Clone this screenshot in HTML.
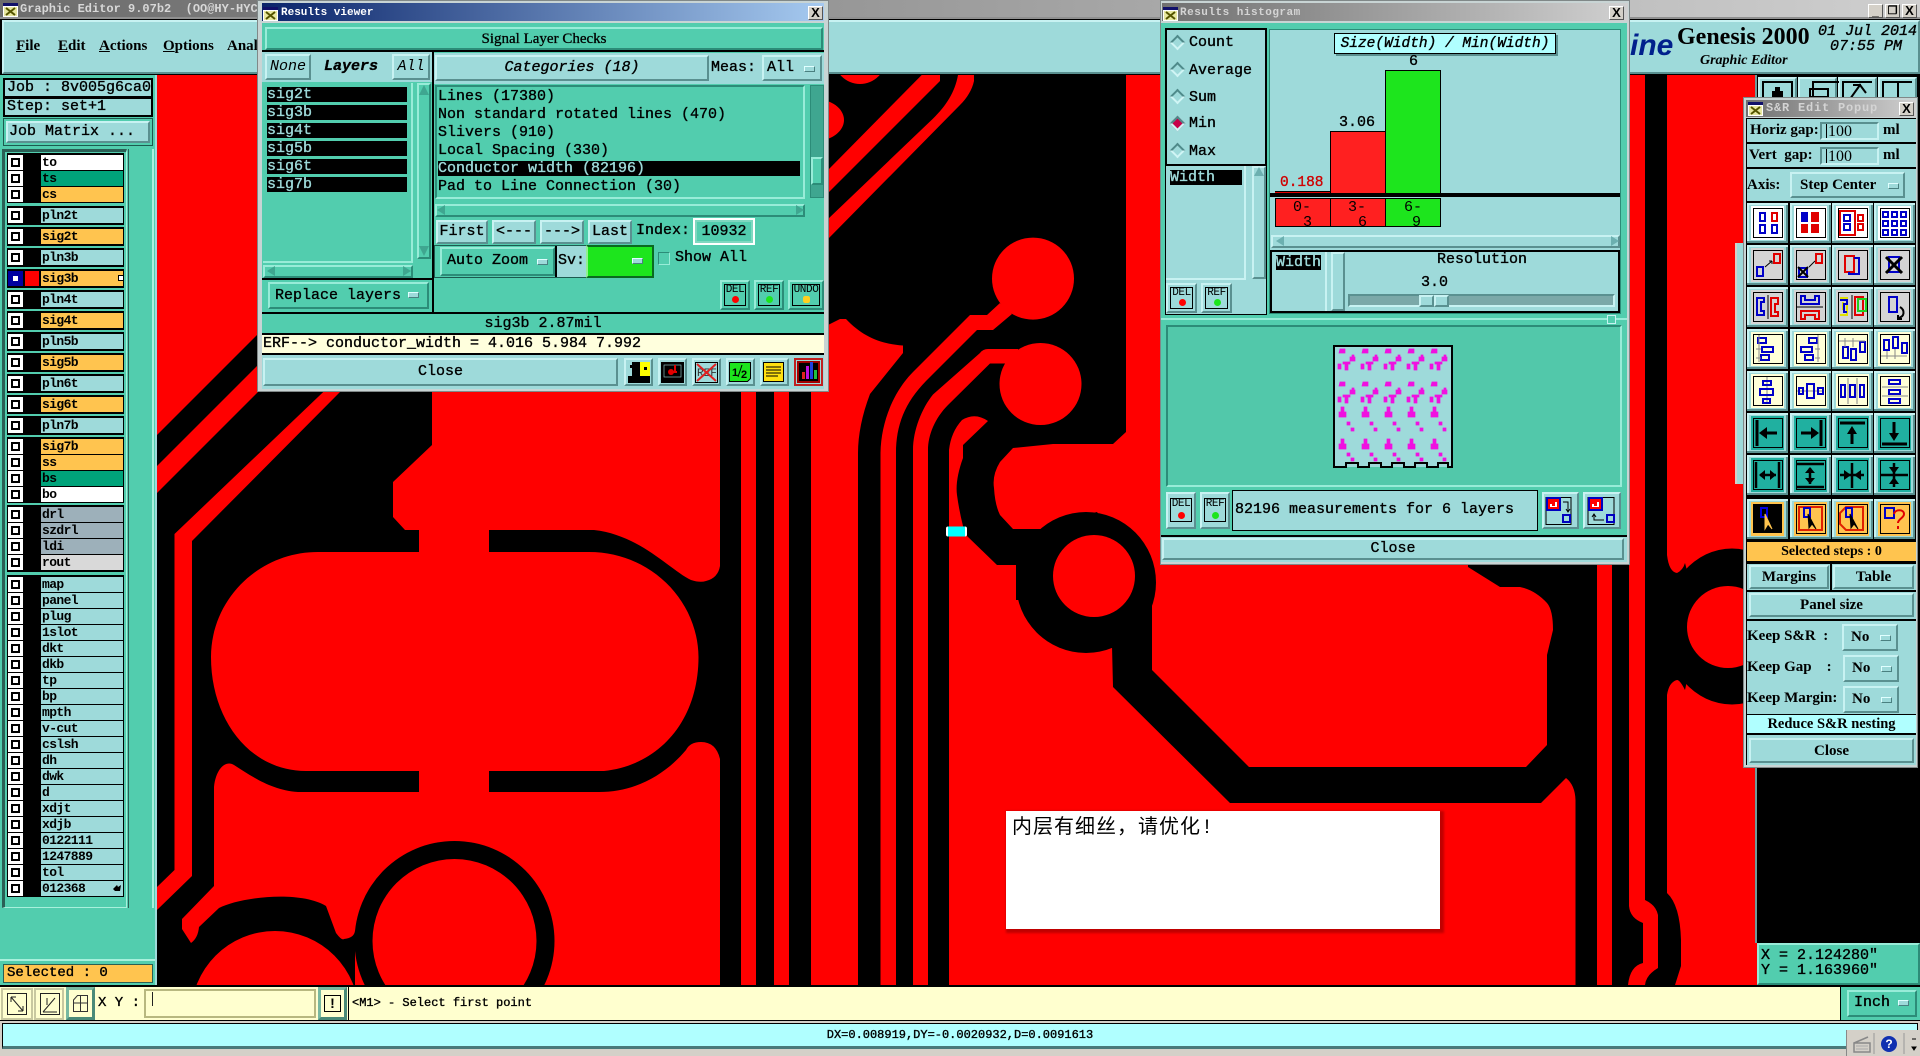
<!DOCTYPE html>
<html><head><meta charset="utf-8"><title>Graphic Editor</title>
<style>
html,body{margin:0;padding:0;width:1920px;height:1056px;overflow:hidden;background:#000}
body{position:relative;font:normal 15px/16px "Liberation Mono",monospace;color:#000;-webkit-text-stroke:.35px #000}
.a{position:absolute;box-sizing:border-box;white-space:pre}
.c{display:flex;align-items:center;justify-content:center}
.bt{background:#9edada;border:2px solid;border-color:#c8f2f2 #5a9090 #5a9090 #c8f2f2}
.tb{background:#52cdae;border:2px solid;border-color:#98ecd8 #2c8c78 #2c8c78 #98ecd8}
.sf{font:bold 15px/16px "Liberation Serif",serif;-webkit-text-stroke:0}
.n{-webkit-text-stroke:0}
.it{font-style:italic}
.mi{position:absolute;box-sizing:border-box;width:11px;height:6px;background:#9edada;border:1px solid;border-color:#e0ffff #4a8080 #4a8080 #e0ffff}
.r{position:absolute;left:8px;width:115px;height:15px}
.r s{position:absolute;left:0;top:0;width:15px;height:15px;background:#fff;box-shadow:inset 0 0 0 3px #fff,inset 0 0 0 5px #000}
.r b{position:absolute;left:33px;top:0;width:81px;height:15px;background:#9edada;font:bold 13px/15px "Liberation Mono",monospace;letter-spacing:-.6px;padding-left:1px;-webkit-text-stroke:0}
.r b.o{background:#ffc44f}.r b.g{background:#00a37a}.r b.w{background:#fff}.r b.y{background:#9db0ba}.r b.l{background:#d9d9d9}
.k{position:absolute;left:7px;width:117px;background:#000}
.sel{position:absolute;background:#000;color:#9edada;-webkit-text-stroke:.35px #9edada}
.dd{position:absolute;width:11px;height:11px;transform:rotate(45deg);background:#9edada;border:2px solid;box-sizing:border-box;border-color:#4f8a8a #d0f5f5 #d0f5f5 #4f8a8a}
.ib{position:absolute;box-sizing:border-box;border:1px solid #000;left:4px;top:3px;right:4px;bottom:3px;font:11px/11px "Liberation Mono",monospace;letter-spacing:-.4px;text-align:center;color:#000;-webkit-text-stroke:0}
.ib i{position:absolute;left:50%;bottom:2px;margin-left:-3px;width:7px;height:7px;border-radius:50%}
.xb{position:absolute;box-sizing:border-box;width:15px;height:14px;background:#d4d0c8;border:1px solid;border-color:#fff #555 #555 #fff;font:bold 13px/12px "Liberation Sans",sans-serif;text-align:center;color:#000;-webkit-text-stroke:0}
</style></head><body>

<svg width="0" height="0" style="position:absolute"><defs>
<g id="tic"><rect width="15" height="14" fill="#fff"/><rect width="15" height="3" fill="#10106a"/><rect x="1" y="4" width="13" height="9" fill="#e8e8a0"/><path d="M3 5l9 7M12 5l-9 7" stroke="#555500" stroke-width="2"/></g>
<g id="cb"><rect width="41" height="40" fill="#9edada"/><path d="M0 0h41v2H2v36H0z" fill="#c8f2f2"/><path d="M41 40H0v-2h39V2h2z" fill="#5a9090"/></g>
</defs></svg>

<!-- PCB canvas -->
<svg class="a" style="left:157px;top:75px" width="1600" height="910" viewBox="157 75 1600 910">
<rect x="157" y="75" width="1600" height="910" fill="#000"/>
<g fill="#f00">
<path d="M157 75H300V292L157 435Z"/>
<path d="M157 466L329 294H356L157 493Z"/>
<path d="M174.5 534L340 376H358L340 392L192 541V876L157 910V887L174.5 870Z"/>
<path d="M432 385V445L393 482V517L405 530H419V552H318C258 552 211 600 211 657C211 720 250 771 306 771H419V792H298C270 790 250 775 234 765C226 760 216 768 214 787V886L182 919V929L191 943Q198 938 199 927L219 908C240 897 300 890 326 906L336 933Q342 941 344 939Q354 938 355 931V985H720V759Q716 742 701 742Q690 742 686 750C665 775 635 792 599 792H489V771H604C660 765 698.5 720 698.5 657C698 600 650 552 589 552H489V530H594C640 535 670 570 691 580Q700 583 706 581Q718 578 720 566V385Z"/>
<rect x="741" y="380" width="15" height="605"/><rect x="774" y="380" width="15" height="605"/>
<path d="M811 985V325H828L840 319H846C862 336 880 344 903 345.5V353L870 394C862 415 858 435 858 453V985Z"/>
<path d="M880.5 985V453C881 420 895 390 913 372L970 315H987L1000 303L1012 314L993 330H977L927 380C905 402 896 425 896 453V985Z"/>
<path d="M913 985V450C913 430 922 408 933 394.5L980 353Q983 349 988 349H1018V363.5H990L948 405C935 418 928 435 928 450V985Z"/>
<circle cx="1033" cy="278.6" r="41"/><circle cx="1040.5" cy="384" r="41"/>
<path d="M921.7 75H940V81L828 193V170Z"/>
<path d="M958 75H974V81C972 90 967 98 960 105L828 239V219L933 118.6C946 106 955 92 958 75Z"/>
<circle cx="860" cy="58" r="26"/><ellipse cx="815" cy="120" rx="29" ry="21"/>
<path d="M949 985V450Q951 432 962 420Q975 412 988 421L963 445V458Q955 480 957 495Q959 510 963 526L967 536L997 565H1016V600H1112V646L1113 687L1230 803H1541L1566 778Q1575 785 1575.5 800V985Z"/>
<path d="M1126 75V432L1113 444H1053L1013 448L1000 462Q992 475 994 488Q995 505 1000 515L1013 529H1053L1077 517L1097 512L1110 530L1152 590V670L1249 767H1526L1547 745V655L1553 630Q1553 610 1547 603Q1535 590 1520 587H1500L1468 567V75Z"/>
<rect x="1597" y="75" width="15" height="910"/>
<path d="M1629 75V906Q1630 918 1643 923V963Q1630 966 1628 985H1645Q1646 975 1658 968V915Q1656 905 1645 900V75Z"/>
<path d="M1667 75V555Q1669 572 1677 573Q1683 570 1685 563L1700 620L1685 690Q1680 680 1677 680Q1669 682 1667 695V893Q1680 905 1681 940V966L1675 985H1757V75Z"/>
</g>
<ellipse cx="454.5" cy="941" rx="100" ry="100" fill="#000"/><ellipse cx="454.5" cy="941" rx="82" ry="82" fill="#f00"/>
<circle cx="275" cy="1015" r="84" fill="#f00"/>
<ellipse cx="1086" cy="582.5" rx="70" ry="70.5" fill="#000"/><circle cx="1094" cy="576" r="41" fill="#f00"/>
<ellipse cx="1732" cy="626.5" rx="68" ry="78" fill="#000"/><circle cx="1728" cy="627" r="41" fill="#f00"/>
<rect x="946" y="526.5" width="21" height="10" rx="2" fill="#fff"/><rect x="948" y="526.5" width="17" height="10" fill="#0ff"/>
</svg>

<!-- annotation -->
<div class="a" style="left:1006px;top:811px;width:438px;height:122px;background:#c00000;filter:blur(1px)"></div>
<div class="a n" style="left:1006px;top:811px;width:434px;height:118px;background:#fff;padding:6px 0 0 6px;font:20px/24px 'Liberation Mono','Noto Sans CJK SC',sans-serif;letter-spacing:1px">内层有细丝，请优化!</div>

<!-- main title + menu -->
<div class="a" style="left:0;top:0;width:1920px;height:19px;background:linear-gradient(90deg,#6c6c6c,#cfcfcf);border-bottom:2px solid #909090"></div>
<svg class="a" style="left:3px;top:3px" width="15" height="14"><use href="#tic"/></svg>
<div class="a n" style="left:20px;top:1px;font:bold 12px/16px 'Liberation Mono',monospace;color:#d8d8d8">Graphic Editor 9.07b2  (OO@HY-HYCAM</div>
<div class="xb" style="left:1868px;top:4px;font-size:12px">_</div><div class="xb" style="left:1885px;top:4px;font-size:11px">&#x2750;</div><div class="xb" style="left:1902px;top:4px">X</div>
<div class="a" style="left:2px;top:20px;width:1918px;height:54px;background:#9edada;border:2px solid;border-color:#c8f2f2 #5a9090 #5a9090 #c8f2f2"></div>
<div class="a sf" style="left:16px;top:38px"><u>F</u>ile</div>
<div class="a sf" style="left:58px;top:38px"><u>E</u>dit</div>
<div class="a sf" style="left:99px;top:38px"><u>A</u>ctions</div>
<div class="a sf" style="left:163px;top:38px"><u>O</u>ptions</div>
<div class="a sf" style="left:227px;top:38px">Analysis</div>
<div class="a n" style="left:1630px;top:31px;font:italic bold 30px/30px 'Liberation Sans',sans-serif;color:#00208c">ine</div>
<div class="a n" style="left:1677px;top:23px;font:bold 24px/28px 'Liberation Serif',serif">Genesis 2000</div>
<div class="a n" style="left:1700px;top:53px;font:italic bold 14px/16px 'Liberation Serif',serif">Graphic Editor</div>
<div class="a" style="left:1818px;top:24px;font:italic 15px/16px 'Liberation Mono',monospace">01 Jul 2014</div>
<div class="a" style="left:1830px;top:39px;font:italic 15px/16px 'Liberation Mono',monospace">07:55 PM</div>

<!-- right panel back -->
<div class="a" style="left:1755px;top:75px;width:165px;height:868px;background:#000;border-left:2px solid #6f9a9a"></div>
<div class="a bt" style="left:1758px;top:77px;width:39px;height:30px"></div><div class="a bt" style="left:1798px;top:77px;width:39px;height:30px"></div><div class="a bt" style="left:1838px;top:77px;width:39px;height:30px"></div><div class="a bt" style="left:1878px;top:77px;width:39px;height:30px"></div>
<svg class="a" style="left:1758px;top:77px" width="160" height="20" fill="none" stroke="#000" stroke-width="2">
<path d="M5 22V5h29v17M55 22V5h26M85 22V5h29M125 22V5h29"/><path d="M14 20v-6h3v-4h5v4h3v6z" fill="#000" stroke="none"/><path d="M52 20h18V12H52zM92 22l10-14 6 8M95 8h8M140 5v18"/></svg>
<div class="a tb" style="left:1757px;top:943px;width:163px;height:42px"></div>
<div class="a" style="left:1761px;top:948px">X = 2.124280"</div>
<div class="a" style="left:1761px;top:963px">Y = 1.163960"</div>

<!-- hidden window behind S&R -->
<div class="a" style="left:1735px;top:243px;width:10px;height:241px;background:#9edada;border-left:2px solid #d4d0c8"></div>

<!-- left panel -->
<div class="a" style="left:0;top:75px;width:157px;height:911px;background:#52cdae;border-right:2px solid #9edada"></div>
<div class="a" style="left:3px;top:78px;width:150px;height:20px;background:#9edada;border:2px solid #000;padding-left:2px;line-height:15px">Job : 8v005g6ca0</div>
<div class="a" style="left:3px;top:97px;width:150px;height:20px;background:#9edada;border:2px solid #000;padding-left:2px;line-height:15px">Step: set+1</div>
<div class="a" style="left:3px;top:118px;width:150px;height:28px;background:#52cdae;border:1px solid #1d5a50"></div>
<div class="a bt c" style="left:6px;top:121px;width:144px;height:22px;justify-content:flex-start;padding-left:1px">Job Matrix ...</div>
<div class="a" style="left:2px;top:149px;width:125px;height:759px;background:#52cdae;border-left:3px solid #2a5f55;border-top:3px solid #2a5f55;border-right:1px solid #a8f0dc;border-bottom:1px solid #a8f0dc"></div>
<div class="a" style="left:128px;top:149px;width:26px;height:812px;background:#52cdae;border-left:1px solid #2a5f55;border-right:2px solid #a8f0dc"></div>
<div class="a" style="left:0;top:908px;width:155px;height:53px;background:#52cdae;border-bottom:2px solid #a8f0dc"></div>
<div class="k" style="top:153px;height:50px"></div><div class="k" style="top:206px;height:19px"></div><div class="k" style="top:227px;height:19px"></div><div class="k" style="top:248px;height:19px"></div><div class="k" style="top:269px;height:19px"></div><div class="k" style="top:290px;height:19px"></div><div class="k" style="top:311px;height:19px"></div><div class="k" style="top:332px;height:19px"></div><div class="k" style="top:353px;height:19px"></div><div class="k" style="top:374px;height:19px"></div><div class="k" style="top:395px;height:19px"></div><div class="k" style="top:416px;height:19px"></div><div class="k" style="top:437px;height:66px"></div><div class="k" style="top:505px;height:67px"></div><div class="k" style="top:575px;height:322px"></div>
<div class="r" style="top:155px"><s></s><b class="w">to</b></div>
<div class="r" style="top:171px"><s></s><b class="g">ts</b></div>
<div class="r" style="top:187px"><s></s><b class="o">cs</b></div>
<div class="r" style="top:208px"><s></s><b>pln2t</b></div>
<div class="r" style="top:229px"><s></s><b class="o">sig2t</b></div>
<div class="r" style="top:250px"><s></s><b>pln3b</b></div>
<div class="r" style="top:271px"><s style="box-shadow:inset 0 0 0 2px #0000a0,inset 0 0 0 5px #0000a0"></s><i style="position:absolute;left:17px;top:0;width:14px;height:15px;background:#f00"></i><b class="o">sig3b</b><i style="position:absolute;left:110px;top:4px;width:6px;height:6px;border:1px solid #000;box-sizing:border-box;background:#fff"></i></div>
<div class="r" style="top:292px"><s></s><b>pln4t</b></div>
<div class="r" style="top:313px"><s></s><b class="o">sig4t</b></div>
<div class="r" style="top:334px"><s></s><b>pln5b</b></div>
<div class="r" style="top:355px"><s></s><b class="o">sig5b</b></div>
<div class="r" style="top:376px"><s></s><b>pln6t</b></div>
<div class="r" style="top:397px"><s></s><b class="o">sig6t</b></div>
<div class="r" style="top:418px"><s></s><b>pln7b</b></div>
<div class="r" style="top:439px"><s></s><b class="o">sig7b</b></div>
<div class="r" style="top:455px"><s></s><b class="o">ss</b></div>
<div class="r" style="top:471px"><s></s><b class="g">bs</b></div>
<div class="r" style="top:487px"><s></s><b class="w">bo</b></div>
<div class="r" style="top:507px"><s></s><b class="y">drl</b></div>
<div class="r" style="top:523px"><s></s><b class="y">szdrl</b></div>
<div class="r" style="top:539px"><s></s><b class="y">ldi</b></div>
<div class="r" style="top:555px"><s></s><b class="l">rout</b></div>
<div class="r" style="top:577px"><s></s><b>map</b></div>
<div class="r" style="top:593px"><s></s><b>panel</b></div>
<div class="r" style="top:609px"><s></s><b>plug</b></div>
<div class="r" style="top:625px"><s></s><b>1slot</b></div>
<div class="r" style="top:641px"><s></s><b>dkt</b></div>
<div class="r" style="top:657px"><s></s><b>dkb</b></div>
<div class="r" style="top:673px"><s></s><b>tp</b></div>
<div class="r" style="top:689px"><s></s><b>bp</b></div>
<div class="r" style="top:705px"><s></s><b>mpth</b></div>
<div class="r" style="top:721px"><s></s><b>v-cut</b></div>
<div class="r" style="top:737px"><s></s><b>cslsh</b></div>
<div class="r" style="top:753px"><s></s><b>dh</b></div>
<div class="r" style="top:769px"><s></s><b>dwk</b></div>
<div class="r" style="top:785px"><s></s><b>d</b></div>
<div class="r" style="top:801px"><s></s><b>xdjt</b></div>
<div class="r" style="top:817px"><s></s><b>xdjb</b></div>
<div class="r" style="top:833px"><s></s><b>0122111</b></div>
<div class="r" style="top:849px"><s></s><b>1247889</b></div>
<div class="r" style="top:865px"><s></s><b>tol</b></div>
<div class="r" style="top:881px"><s></s><b>012368</b><svg style="position:absolute;left:104px;top:3px" width="10" height="9"><path d="M1 5l4-4 1 2 3-2-1 6H3z"/></svg></div>
<div class="a" style="left:3px;top:964px;width:150px;height:19px;background:#ffc44f;border:1px solid #2a5f55;padding-left:3px;line-height:17px;font-size:14px">Selected : 0</div>

<!-- bottom toolbar -->
<div class="a" style="left:0;top:985px;width:1920px;height:71px;background:#000"></div>
<div class="a" style="left:0;top:987px;width:1840px;height:33px;background:#ffffcf"></div>
<div class="a" style="left:1px;top:988px;width:32px;height:32px;background:#ffffcf;border:2px solid #c8c8a0"></div>
<div class="a" style="left:34px;top:988px;width:30px;height:32px;background:#ffffcf;border:2px solid #c8c8a0"></div>
<svg class="a" style="left:6px;top:992px" width="22" height="24" fill="none" stroke="#222"><rect x="1.5" y="1.5" width="19" height="21"/><path d="M5 5l12 14M5 5v5M5 5h5M17 19v-5M17 19h-5"/></svg>
<svg class="a" style="left:39px;top:992px" width="22" height="24" fill="none" stroke="#222"><rect x="1.5" y="1.5" width="19" height="21"/><path d="M4 20L16 6M4 20h14M8 6v7"/></svg>
<div class="a" style="left:66px;top:987px;width:29px;height:33px;background:#ffffcf;border:3px solid;border-color:#78b8a0 #4a8a78 #4a8a78 #78b8a0"></div>
<svg class="a" style="left:72px;top:994px" width="17" height="19" fill="none" stroke="#333"><path d="M1.5 17.5V6l4-4.5h10V17.5zM1.5 9h14M8.500 1.500V17.500"/></svg>
<div class="a" style="left:98px;top:995px;font-size:14px">X Y :</div>
<div class="a" style="left:144px;top:989px;width:172px;height:29px;background:#ffffcf;border:2px solid #b8b880"></div>
<div class="a" style="left:152px;top:992px;width:1px;height:14px;background:#222"></div>
<div class="a" style="left:318px;top:987px;width:29px;height:33px;background:#ffffcf;border:3px solid;border-color:#78b8a0 #4a8a78 #4a8a78 #78b8a0"></div>
<div class="a n" style="left:324px;top:995px;width:17px;height:17px;border:1px solid #000;font:bold 14px/15px 'Liberation Sans',sans-serif;text-align:center">!</div>
<div class="a" style="left:352px;top:995px;font-size:12px">&lt;M1&gt; - Select first point</div>
<div class="a" style="left:348px;top:987px;width:1px;height:33px;background:#000"></div>
<div class="a" style="left:1840px;top:987px;width:80px;height:33px;background:#52cdae;border-left:1px solid #000"></div>
<div class="a tb" style="left:1847px;top:990px;width:70px;height:27px;line-height:22px;padding-left:5px">Inch<i class="mi" style="left:49px;top:8px"></i></div>

<!-- status bar -->
<div class="a" style="left:0;top:1021px;width:1920px;height:35px;background:#d4d0c8"></div>
<div class="a" style="left:2px;top:1023px;width:1916px;height:26px;background:#b0ffff;border:1px solid #000;border-bottom:3px solid #4a7a7a"></div>
<div class="a c" style="left:2px;top:1027px;width:1916px;height:16px;font-size:12px">DX=0.008919,DY=-0.0020932,D=0.0091613</div>
<div class="a" style="left:1846px;top:1030px;width:74px;height:26px;background:#d4d0c8;border-left:1px solid #888"></div>
<svg class="a" style="left:1852px;top:1033px" width="68" height="21" fill="none"><path d="M2 10h16v9H2zM2 10l14-6" stroke="#888" stroke-width="1.500"/><path d="M4 13h12M4 16h12" stroke="#aaa"/><path d="M22 0v21M52 0v21" stroke="#999"/><circle cx="37" cy="11" r="8" fill="#1030b0"/><path d="M60 6h4M60 14h4l-2 3z" stroke="#000" fill="#000"/></svg>
<div class="a c n" style="left:1881px;top:1036px;width:16px;height:16px;color:#fff;font:bold 12px/16px 'Liberation Sans',sans-serif">?</div>

<!-- RESULTS VIEWER -->
<div class="a" style="left:257px;top:0;width:572px;height:392px;background:#c8d4d4;border:1px solid #808888"></div>
<div class="a" style="left:262px;top:3px;width:562px;height:18px;background:linear-gradient(90deg,#0a246a,#a6caf0)"></div>
<svg class="a" style="left:263px;top:7px" width="15" height="14"><use href="#tic"/></svg>
<div class="a n" style="left:281px;top:5px;font:bold 11px/16px 'Liberation Mono',monospace;color:#fff">Results viewer</div>
<div class="xb" style="left:808px;top:6px">X</div>
<div class="a" style="left:262px;top:23px;width:562px;height:366px;background:#52cdae"></div>
<div class="a tb c sf" style="left:265px;top:27px;width:558px;height:23px;font-weight:normal;-webkit-text-stroke:.3px #000">Signal Layer Checks</div>
<div class="a" style="left:262px;top:50px;width:562px;height:2px;background:#000"></div>
<div class="a" style="left:262px;top:52px;width:172px;height:30px;background:#9edada"></div>
<div class="a bt c it n" style="left:265px;top:54px;width:46px;height:26px">None</div>
<div class="a c it" style="left:313px;top:54px;width:76px;height:26px;font-weight:bold">Layers</div>
<div class="a bt c it n" style="left:392px;top:54px;width:38px;height:26px">All</div>
<div class="a" style="left:432px;top:52px;width:2px;height:260px;background:#000"></div>
<div class="a" style="left:434px;top:53px;width:390px;height:31px;background:#9edada"></div>
<div class="a bt c it" style="left:435px;top:55px;width:274px;height:26px">Categories (18)</div>
<div class="a" style="left:711px;top:60px">Meas:</div>
<div class="a bt" style="left:762px;top:55px;width:60px;height:26px;padding-left:3px;line-height:21px">All<i class="mi" style="left:40px;top:9px"></i></div>
<!-- layers list -->
<div class="a" style="left:263px;top:83px;width:150px;height:180px;border-right:2px solid #98ecd8;border-bottom:2px solid #98ecd8"></div>
<div class="sel" style="left:267px;top:87px;width:140px;height:15px;line-height:15px">sig2t</div>
<div class="sel" style="left:267px;top:105px;width:140px;height:15px;line-height:15px">sig3b</div>
<div class="sel" style="left:267px;top:123px;width:140px;height:15px;line-height:15px">sig4t</div>
<div class="sel" style="left:267px;top:141px;width:140px;height:15px;line-height:15px">sig5b</div>
<div class="sel" style="left:267px;top:159px;width:140px;height:15px;line-height:15px">sig6t</div>
<div class="sel" style="left:267px;top:177px;width:140px;height:15px;line-height:15px">sig7b</div>
<div class="a tb" style="left:417px;top:83px;width:14px;height:176px"></div>
<div class="a tb" style="left:263px;top:265px;width:150px;height:13px"></div>
<div class="a tb c" style="left:268px;top:282px;width:161px;height:27px;justify-content:flex-start;padding-left:5px">Replace layers<i class="mi" style="left:138px;top:8px"></i></div>
<div class="a" style="left:262px;top:278px;width:172px;height:2px;background:#000"></div>
<!-- categories list -->
<div class="a" style="left:435px;top:85px;width:370px;height:114px;border:2px solid;border-color:#2c8c78 #98ecd8 #98ecd8 #2c8c78"></div>
<div class="a" style="left:438px;top:89px">Lines (17380)</div>
<div class="a" style="left:438px;top:107px">Non standard rotated lines (470)</div>
<div class="a" style="left:438px;top:125px">Slivers (910)</div>
<div class="a" style="left:438px;top:143px">Local Spacing (330)</div>
<div class="sel" style="left:438px;top:161px;width:362px;height:15px;line-height:15px">Conductor width (82196)</div>
<div class="a" style="left:438px;top:179px">Pad to Line Connection (30)</div>
<div class="a" style="left:810px;top:85px;width:14px;height:113px;background:#3fa690;border:1px solid #2c8c78"></div>
<div class="a tb" style="left:811px;top:157px;width:12px;height:28px"></div>
<div class="a tb" style="left:435px;top:204px;width:370px;height:13px;background:#52cdae"></div>
<div class="a bt c" style="left:436px;top:220px;width:52px;height:24px">First</div>
<div class="a bt c" style="left:492px;top:220px;width:44px;height:24px">&lt;---</div>
<div class="a bt c" style="left:540px;top:220px;width:44px;height:24px">---&gt;</div>
<div class="a bt c" style="left:588px;top:220px;width:44px;height:24px">Last</div>
<div class="a" style="left:636px;top:223px">Index:</div>
<div class="a c" style="left:693px;top:218px;width:62px;height:27px;border:2px solid #fff;outline:2px solid #7fd8c0;outline-offset:-4px">10932</div>
<div class="a" style="left:434px;top:245px;width:122px;height:33px;background:#52cdae;border:1px solid #1d5a50;border-right:0"></div>
<div class="a" style="left:556px;top:245px;width:31px;height:33px;background:#9edada;border:solid #1d5a50;border-width:1px 0"></div>
<div class="a tb" style="left:440px;top:247px;width:115px;height:29px;line-height:24px;padding-left:5px">Auto Zoom<i class="mi" style="left:95px;top:10px"></i></div>
<div class="a" style="left:555px;top:246px;width:2px;height:31px;background:#000"></div>
<div class="a" style="left:558px;top:253px">Sv:</div>
<div class="a" style="left:586px;top:245px;width:68px;height:33px;background:#1de51d;border:2px solid;border-color:#0a6a20 #0a6a20 #0a6a20 #90f090"></div>
<i class="mi" style="left:632px;top:258px;background:#9edada"></i>
<div class="a" style="left:658px;top:252px;width:12px;height:13px;border:1px solid;border-color:#2c8c78 #98ecd8 #98ecd8 #2c8c78"></div>
<div class="a" style="left:675px;top:250px">Show All</div>
<div class="a tb" style="left:720px;top:280px;width:30px;height:30px"><div class="ib" style="left:2px;right:2px;top:2px;bottom:2px">DEL<i style="background:#f00"></i></div></div>
<div class="a tb" style="left:754px;top:280px;width:30px;height:30px"><div class="ib" style="left:2px;right:2px;top:2px;bottom:2px">REF<i style="background:#1de51d"></i></div></div>
<div class="a tb" style="left:788px;top:280px;width:36px;height:30px"><div class="ib" style="left:2px;right:2px;top:2px;bottom:2px">UNDO<i style="background:#ffd020;border-radius:30%"></i></div></div>
<div class="a" style="left:262px;top:312px;width:562px;height:2px;background:#000"></div>
<div class="a c" style="left:262px;top:315px;width:562px;height:18px">sig3b 2.87mil</div>
<div class="a" style="left:262px;top:333px;width:562px;height:22px;background:#ffffdd;border:2px solid #000;border-width:2px 0;padding-left:1px;line-height:18px">ERF--&gt; conductor_width = 4.016 5.984 7.992</div>
<div class="a" style="left:262px;top:355px;width:562px;height:34px;background:#9edada"></div>
<div class="a bt c" style="left:263px;top:358px;width:355px;height:28px">Close</div>
<div class="a bt" style="left:624px;top:358px;width:29px;height:28px"></div><div class="a bt" style="left:658px;top:358px;width:29px;height:28px"></div><div class="a bt" style="left:692px;top:358px;width:29px;height:28px"></div><div class="a bt" style="left:726px;top:358px;width:29px;height:28px"></div><div class="a bt" style="left:760px;top:358px;width:29px;height:28px"></div><div class="a bt" style="left:794px;top:358px;width:29px;height:28px;border-color:#c02020"></div>
<svg class="a n" style="left:0;top:0" width="830" height="392" fill="none">
<rect x="628" y="376" width="22" height="7" fill="#000"/><rect x="632" y="362" width="8" height="14" fill="#000"/><rect x="640" y="362" width="10" height="14" fill="#ff0"/><rect x="630" y="365" width="3" height="3" fill="#000"/><rect x="644" y="367" width="3" height="3" fill="#000"/>
<rect x="661.500" y="362.500" width="22" height="20" fill="#000" stroke="#000"/><rect x="664" y="365" width="17" height="12" fill="#000" stroke="#9edada" stroke-width=".6"/><circle cx="671" cy="372" r="3" fill="#e00000"/><path d="M673 372h4M675 365v7" stroke="#e00000" stroke-width="2"/>
<rect x="695.500" y="362.500" width="22" height="20" stroke="#000"/><text x="697" y="376" font-family="Liberation Mono" font-size="11" fill="#333">REF</text><path d="M697 364l19 17M716 364l-19 17" stroke="#e02020" stroke-width="2"/>
<path d="M729.500 362.500h21v16l-3 3h-18z" fill="#1de51d" stroke="#000"/><text x="732" y="376" font-family="Liberation Sans" font-weight="bold" font-size="11" fill="#000">1</text><path d="M738 377l4-12" stroke="#000"/><text x="741" y="378" font-family="Liberation Sans" font-weight="bold" font-size="11" fill="#000">2</text>
<path d="M763.500 362.500h20v19h-20z" fill="#ffe010" stroke="#000"/><path d="M766 367h15M766 370h15M766 373h15M766 376h12" stroke="#000"/>
<rect x="798" y="362" width="21" height="20" fill="#000" stroke="#a00000" stroke-width="2"/><rect x="802" y="372" width="3" height="7" fill="#e02020"/><rect x="806" y="366" width="3" height="13" fill="#c010e0"/><rect x="810" y="362" width="3" height="17" fill="#2040e0"/><rect x="814" y="370" width="3" height="9" fill="#20c040"/>
<g fill="#3fa690"><path d="M424 85l5 10h-10zM424 256l5-10h-10zM267 271l8-5v10zM411 271l-8-5v10zM817 88l5 9h-10zM817 196l5-9h-10zM437 210l8-5v10zM804 210l-8-5v10z"/></g>
</svg>

<!-- RESULTS HISTOGRAM -->
<div class="a" style="left:1160px;top:0;width:470px;height:565px;background:#c8d4d4;border:1px solid #808888"></div>
<div class="a" style="left:1162px;top:3px;width:466px;height:18px;background:linear-gradient(90deg,#707070,#d0d0d0)"></div>
<svg class="a" style="left:1163px;top:7px" width="15" height="14"><use href="#tic"/></svg>
<div class="a n" style="left:1180px;top:5px;font:bold 11px/16px 'Liberation Mono',monospace;color:#d4d4d4;letter-spacing:.5px">Results histogram</div>
<div class="xb" style="left:1609px;top:6px">X</div>
<div class="a" style="left:1161px;top:23px;width:466px;height:514px;background:#52cdae"></div>
<div class="a" style="left:1165px;top:28px;width:102px;height:138px;background:#9edada;border:2px solid #000"></div>
<div class="dd" style="left:1172px;top:37px"></div><div class="a" style="left:1189px;top:35px">Count</div>
<div class="dd" style="left:1172px;top:64px"></div><div class="a" style="left:1189px;top:63px">Average</div>
<div class="dd" style="left:1172px;top:91px"></div><div class="a" style="left:1189px;top:90px">Sum</div>
<div class="dd" style="left:1172px;top:118px;background:#c8004a"></div><div class="a" style="left:1189px;top:116px">Min</div>
<div class="dd" style="left:1172px;top:145px"></div><div class="a" style="left:1189px;top:144px">Max</div>
<div class="a" style="left:1165px;top:166px;width:102px;height:149px;background:#9edada;border:1px solid #000;border-top:0"></div>
<div class="a" style="left:1166px;top:166px;width:80px;height:114px;border-right:2px solid #c8f2f2;border-bottom:2px solid #c8f2f2"></div>
<div class="sel" style="left:1170px;top:170px;width:72px;height:15px;line-height:15px;color:#9edada">Width</div>
<div class="a bt" style="left:1252px;top:166px;width:14px;height:113px"></div>
<div class="a bt" style="left:1166px;top:283px;width:31px;height:30px"><div class="ib" style="left:2px;right:2px;top:2px;bottom:2px">DEL<i style="background:#f00"></i></div></div>
<div class="a bt" style="left:1201px;top:283px;width:31px;height:30px"><div class="ib" style="left:2px;right:2px;top:2px;bottom:2px">REF<i style="background:#1de51d"></i></div></div>
<div class="a" style="left:1269px;top:29px;width:352px;height:285px;background:#9edada;border:1px solid #2c8c78"></div>
<div class="a c it" style="left:1334px;top:33px;width:222px;height:21px;background:#b0ffff;border:1px solid #000;box-shadow:2px 2px 0 #5a9090;font-size:14.500px">Size(Width) / Min(Width)</div>
<div class="a" style="left:1275px;top:191px;width:55px;height:2px;background:#d00;border-top:1px solid #000"></div>
<div class="a" style="left:1330px;top:131px;width:56px;height:62px;background:#ff2020;border:1px solid #000;border-bottom:0"></div>
<div class="a" style="left:1385px;top:70px;width:56px;height:123px;background:#1de51d;border:1px solid #000;border-bottom:0"></div>
<div class="a" style="left:1270px;top:193px;width:350px;height:4px;background:#000"></div>
<div class="a" style="left:1280px;top:175px;color:#d00000;font-size:14.500px;-webkit-text-stroke:.35px #d00000">0.188</div>
<div class="a" style="left:1339px;top:115px;font-size:15px">3.06</div>
<div class="a" style="left:1409px;top:54px;font-size:15px">6</div>
<div class="a" style="left:1275px;top:198px;width:56px;height:29px;background:#ff2020;border:1px solid #000"></div>
<div class="a" style="left:1330px;top:198px;width:56px;height:29px;background:#ff2020;border:1px solid #000"></div>
<div class="a" style="left:1385px;top:198px;width:56px;height:29px;background:#1de51d;border:1px solid #000"></div>
<div class="a n" style="left:1293px;top:200px">0-</div><div class="a n" style="left:1303px;top:215px;height:12px;overflow:hidden">3</div>
<div class="a n" style="left:1348px;top:200px">3-</div><div class="a n" style="left:1358px;top:215px;height:12px;overflow:hidden">6</div>
<div class="a n" style="left:1404px;top:200px">6-</div><div class="a n" style="left:1412px;top:215px;height:12px;overflow:hidden">9</div>
<div class="a bt" style="left:1271px;top:235px;width:349px;height:13px"></div>
<div class="a" style="left:1270px;top:250px;width:350px;height:63px;background:#9edada;border:2px solid #000"></div>
<div class="a" style="left:1272px;top:252px;width:55px;height:59px;border-right:2px solid #c8f2f2"></div>
<div class="sel" style="left:1276px;top:255px;width:45px;height:15px;line-height:15px">Width</div>
<div class="a bt" style="left:1331px;top:252px;width:14px;height:59px"></div>
<div class="a" style="left:1437px;top:252px">Resolution</div>
<div class="a" style="left:1421px;top:275px">3.0</div>
<div class="a" style="left:1348px;top:294px;width:267px;height:13px;background:#7ba8a8;border:2px solid;border-color:#5a9090 #c8f2f2 #c8f2f2 #5a9090"></div>
<div class="a bt" style="left:1419px;top:295px;width:15px;height:12px"></div><div class="a bt" style="left:1434px;top:295px;width:15px;height:12px"></div>
<div class="a" style="left:1161px;top:318px;width:466px;height:2px;background:#98ecd8"></div>
<div class="a" style="left:1607px;top:315px;width:9px;height:9px;background:#52cdae;border:1px solid #c8f2f2"></div>
<div class="a" style="left:1166px;top:325px;width:456px;height:162px;background:#52c8aa;border:2px solid;border-color:#2c8c78 #98ecd8 #98ecd8 #2c8c78"></div>
<svg class="a" style="left:1333px;top:345px" width="120" height="123">
<defs><pattern id="dots" x="4" y="0" width="23" height="123" patternUnits="userSpaceOnUse"><g fill="#f010e0" stroke="#f010e0" stroke-width=".7">
<path d="M3 4h5v4H2zM13 12h5v4h-5zM15 10h2v3h-2zM1 19h3v5H1zM6 17h7v2h-2v6H8v-6H6z"/>
<path d="M3 37h5v4H2zM13 45h5v4h-5zM15 43h2v3h-2zM1 52h3v5H1zM6 50h7v2h-2v6H8v-6H6z"/>
<path d="M4 62h3v5h2v5H2v-5h2zM10 77h3v3h-3zM14 83h3v3h-3z"/>
<path d="M4 94h3v5h2v5H2v-5h2zM10 108h3v3h-3zM14 113h3v3h-3z"/></g></pattern></defs>
<rect x="1" y="1" width="118" height="121" fill="#9edada"/><rect x="2" y="2" width="116" height="117" fill="url(#dots)"/>
<path d="M1 122V1H119V122H115V118H105V122H94V118H82V122H71V118H59V122H48V118H36V122H25V118H13V122Z" fill="none" stroke="#000" stroke-width="2"/></svg>
<div class="a bt" style="left:1166px;top:492px;width:30px;height:37px"><div class="ib" style="left:2px;right:2px;top:4px;bottom:5px">DEL<i style="background:#f00"></i></div></div>
<div class="a bt" style="left:1200px;top:492px;width:30px;height:37px"><div class="ib" style="left:2px;right:2px;top:4px;bottom:5px">REF<i style="background:#1de51d"></i></div></div>
<div class="a" style="left:1232px;top:490px;width:306px;height:41px;background:#9edada;border:1px solid #000;padding-left:2px;line-height:38px">82196 measurements for 6 layers</div>
<div class="a bt" style="left:1542px;top:492px;width:37px;height:37px"></div><div class="a bt" style="left:1583px;top:492px;width:38px;height:37px"></div>
<svg class="a" style="left:1540px;top:490px" width="90" height="42" fill="none">
<rect x="6" y="7.500" width="25" height="27" stroke="#000"/><rect x="7" y="8" width="13" height="12" fill="#f00" stroke="#0000c0" stroke-width="2"/><path d="M10 17v-3h2v2h3v-4h2v5z" fill="#fff"/><rect x="23" y="25" width="7" height="7" stroke="#0000c0" stroke-width="2"/><path d="M23 12h5v9M26 19l2 3 2-3" stroke="#000"/>
<rect x="48" y="7.500" width="26" height="27" stroke="#000"/><rect x="49" y="8" width="13" height="12" fill="#f00" stroke="#0000c0" stroke-width="2"/><path d="M52 17v-3h2v2h3v-4h2v5z" fill="#fff"/><rect x="67" y="25" width="7" height="7" stroke="#0000c0" stroke-width="2"/><path d="M64 30H54v-5M52 27l2-3 2 3" stroke="#000"/>
</svg>
<div class="a" style="left:1161px;top:535px;width:466px;height:27px;background:#9edada;border-top:2px solid #000"></div>
<div class="a bt c" style="left:1162px;top:538px;width:462px;height:22px">Close</div>
<svg class="a" style="left:1160px;top:0" width="470" height="250"><g fill="#6cb0b0"><path d="M99 167l5 9h-10zM99 276l5-9h-10zM116 241l8-5v10zM459 241l-8-5v10zM179 253l5 9h-10zM179 309l5-9h-10z"/></g></svg>

<!-- S&R POPUP -->
<div class="a" style="left:1743px;top:97px;width:175px;height:671px;background:#c8d4d4;border:1px solid #808888"></div>
<div class="a" style="left:1746px;top:100px;width:170px;height:17px;background:linear-gradient(90deg,#707070,#d0d0d0)"></div>
<svg class="a" style="left:1748px;top:102px" width="15" height="14"><use href="#tic"/></svg>
<div class="a n" style="left:1766px;top:100px;font:bold 12px/16px 'Liberation Mono',monospace;color:#d4d4d4;letter-spacing:.8px">S&amp;R Edit Popup</div>
<div class="xb" style="left:1899px;top:102px">X</div>
<div class="a" style="left:1746px;top:118px;width:170px;height:647px;background:#000"></div>
<div class="a" style="left:1747px;top:119px;width:169px;height:23px;background:#9edada"></div>
<div class="a" style="left:1747px;top:144px;width:169px;height:23px;background:#9edada"></div>
<div class="a" style="left:1747px;top:169px;width:169px;height:32px;background:#9edada"></div>
<div class="a sf" style="left:1750px;top:122px">Horiz gap:</div>
<div class="a sf" style="left:1749px;top:147px">Vert  gap:</div>
<div class="a n" style="left:1820px;top:122px;width:59px;height:18px;background:#9edada;border:2px solid;border-color:#5a9090 #c8f2f2 #c8f2f2 #5a9090;font:16px/15px 'Liberation Serif',serif;padding-left:6px">100</div>
<div class="a n" style="left:1820px;top:147px;width:59px;height:18px;background:#9edada;border:2px solid;border-color:#5a9090 #c8f2f2 #c8f2f2 #5a9090;font:16px/15px 'Liberation Serif',serif;padding-left:6px">100</div>
<div class="a" style="left:1826px;top:124px;width:1px;height:14px;background:#000"></div><div class="a" style="left:1826px;top:149px;width:1px;height:14px;background:#000"></div>
<div class="a sf" style="left:1883px;top:122px">ml</div><div class="a sf" style="left:1883px;top:147px">ml</div>
<div class="a sf" style="left:1747px;top:177px">Axis:</div>
<div class="a bt sf" style="left:1790px;top:172px;width:115px;height:26px;line-height:22px;padding-left:8px">Step Center<i class="mi" style="left:96px;top:9px"></i></div>
<svg class="a" style="left:1747px;top:203px" width="170" height="340" fill="none" stroke-width="2">
<!-- row 1 -->
<g transform="translate(0,0)"><use href="#cb"/><rect x="4" y="3" width="33" height="34" fill="#fff"/><rect x="6.500" y="5.500" width="29" height="29" stroke="#000" stroke-width="1"/><g stroke="#0000c8"><rect x="13" y="10" width="5" height="8"/><rect x="13" y="22" width="5" height="8"/><rect x="25" y="22" width="5" height="8"/></g><rect x="25" y="10" width="5" height="8" stroke="#e00000"/></g>
<g transform="translate(43,0)"><use href="#cb"/><rect x="4" y="3" width="33" height="34" fill="#fff"/><rect x="6.500" y="5.500" width="29" height="29" stroke="#000" stroke-width="1"/><rect x="11" y="9" width="7" height="10" fill="#0000c8"/><rect x="21" y="9" width="8" height="10" fill="#e00000"/><rect x="11" y="21" width="7" height="9" fill="#e00000"/><rect x="21" y="21" width="8" height="9" fill="#e00000"/></g>
<g transform="translate(85,0)"><use href="#cb"/><rect x="4" y="3" width="33" height="34" fill="#fff"/><rect x="6.500" y="5.500" width="29" height="29" stroke="#000" stroke-width="1"/><rect x="8" y="8" width="15" height="24" stroke="#e00000"/><rect x="12" y="12" width="6" height="6" stroke="#0000c8"/><rect x="12" y="21" width="6" height="6" stroke="#0000c8"/><rect x="26" y="12" width="5" height="6" stroke="#e00000"/><rect x="26" y="21" width="5" height="6" stroke="#e00000"/></g>
<g transform="translate(127,0)"><use href="#cb"/><rect x="4" y="3" width="33" height="34" fill="#fff"/><rect x="6.500" y="5.500" width="29" height="29" stroke="#000" stroke-width="1"/><g stroke="#0000c8"><rect x="9" y="9" width="5" height="5"/><rect x="18" y="9" width="5" height="5"/><rect x="27" y="9" width="5" height="5"/><rect x="9" y="18" width="5" height="5"/><rect x="18" y="18" width="5" height="5"/><rect x="27" y="18" width="5" height="5"/><rect x="9" y="27" width="5" height="5"/><rect x="18" y="27" width="5" height="5"/><rect x="27" y="27" width="5" height="5"/></g></g>
<!-- row 2 -->
<g transform="translate(0,42)"><use href="#cb"/><rect x="4" y="3" width="33" height="34" fill="#d4d4d4"/><rect x="6.500" y="5.500" width="29" height="29" stroke="#000" stroke-width="1"/><rect x="10" y="22" width="6" height="9" stroke="#0000c8"/><rect x="27" y="9" width="6" height="9" stroke="#e00000"/><path d="M18 22l7-6M25 16h-3M25 16v3" stroke="#000" stroke-width="1"/></g>
<g transform="translate(43,42)"><use href="#cb"/><rect x="4" y="3" width="33" height="34" fill="#d4d4d4"/><rect x="6.500" y="5.500" width="29" height="29" stroke="#000" stroke-width="1"/><rect x="9" y="23" width="8" height="9" stroke="#0000c8"/><path d="M8 22l10 10M18 22L8 32" stroke="#000"/><rect x="26" y="9" width="6" height="9" stroke="#e00000"/><path d="M19 22l6-6" stroke="#000" stroke-width="1"/></g>
<g transform="translate(85,42)"><use href="#cb"/><rect x="4" y="3" width="33" height="34" fill="#d4d4d4"/><rect x="6.500" y="5.500" width="29" height="29" stroke="#000" stroke-width="1"/><rect x="13" y="11" width="9" height="16" stroke="#e00000"/><path d="M22 13h5v16h-10v-2" stroke="#0000c8"/></g>
<g transform="translate(127,42)"><use href="#cb"/><rect x="4" y="3" width="33" height="34" fill="#d4d4d4"/><rect x="6.500" y="5.500" width="29" height="29" stroke="#000" stroke-width="1"/><rect x="15" y="12" width="10" height="15" stroke="#0000c8"/><path d="M12 12l16 16M28 12L12 28" stroke="#000" stroke-width="3"/></g>
<!-- row 3 -->
<g transform="translate(0,84)"><use href="#cb"/><rect x="4" y="3" width="33" height="34" fill="#d4d4d4"/><rect x="6.500" y="5.500" width="29" height="29" stroke="#000" stroke-width="1"/><path d="M10 11h7v4h-3v9h3v4h-7z" stroke="#0000c8"/><path d="M21 8v24" stroke="#000" stroke-width="1"/><path d="M31 11h-7v18h7v-4h-3v-8h3z" stroke="#e00000"/></g>
<g transform="translate(43,84)"><use href="#cb"/><rect x="4" y="3" width="33" height="34" fill="#d4d4d4"/><rect x="6.500" y="5.500" width="29" height="29" stroke="#000" stroke-width="1"/><path d="M11 9v8h18V9h-4v4h-10V9z" stroke="#0000c8"/><path d="M7 20h26" stroke="#000" stroke-width="1"/><path d="M11 32v-8h18v8h-4v-4h-10v4z" stroke="#e00000"/></g>
<g transform="translate(85,84)"><use href="#cb"/><rect x="4" y="3" width="33" height="34" fill="#d4d4d4"/><rect x="6.500" y="5.500" width="29" height="29" stroke="#000" stroke-width="1"/><path d="M8 11h7v17h-7M11 15v8" stroke="#e0e000"/><path d="M8 13h7v4h-3v8h3" stroke="#0000c8"/><path d="M20 8v24" stroke="#000" stroke-width="1"/><path d="M23 10h8v18h-8z" stroke="#e00000"/><path d="M26 12h8v12h-8z" stroke="#20d020"/></g>
<g transform="translate(127,84)"><use href="#cb"/><rect x="4" y="3" width="33" height="34" fill="#d4d4d4"/><rect x="6.500" y="5.500" width="29" height="29" stroke="#000" stroke-width="1"/><rect x="15" y="10" width="8" height="15" stroke="#0000c8"/><path d="M26 20c5 3 5 10-2 11M24 28v4h4" stroke="#000"/></g>
<!-- row 4 -->
<g transform="translate(0,126)"><use href="#cb"/><rect x="4" y="3" width="33" height="34" fill="#ffffd8"/><rect x="6.500" y="5.500" width="29" height="29" stroke="#000" stroke-width="1"/><g stroke="#0000c8"><rect x="11" y="9" width="8" height="5"/><rect x="15" y="18" width="11" height="5"/><rect x="14" y="26" width="8" height="5"/></g><path d="M12 6v27M9 20h5M9 29h5" stroke="#888" stroke-width="1"/></g>
<g transform="translate(43,126)"><use href="#cb"/><rect x="4" y="3" width="33" height="34" fill="#ffffd8"/><rect x="6.500" y="5.500" width="29" height="29" stroke="#000" stroke-width="1"/><g stroke="#0000c8"><rect x="19" y="9" width="8" height="5"/><rect x="11" y="18" width="11" height="5"/><rect x="15" y="26" width="8" height="5"/></g><path d="M28 6v27M25 20h5M25 29h5" stroke="#888" stroke-width="1"/></g>
<g transform="translate(85,126)"><use href="#cb"/><rect x="4" y="3" width="33" height="34" fill="#ffffd8"/><rect x="6.500" y="5.500" width="29" height="29" stroke="#000" stroke-width="1"/><g stroke="#0000c8"><rect x="11" y="18" width="5" height="11"/><rect x="19" y="20" width="5" height="11"/><rect x="28" y="13" width="5" height="10"/></g><path d="M7 12h26M13 9v9M21 9v9" stroke="#888" stroke-width="1"/></g>
<g transform="translate(127,126)"><use href="#cb"/><rect x="4" y="3" width="33" height="34" fill="#ffffd8"/><rect x="6.500" y="5.500" width="29" height="29" stroke="#000" stroke-width="1"/><g stroke="#0000c8"><rect x="10" y="11" width="5" height="10"/><rect x="19" y="8" width="5" height="11"/><rect x="28" y="14" width="5" height="10"/></g><path d="M7 27h26M13 22v8M21 20v10" stroke="#888" stroke-width="1"/></g>
<!-- row 5 -->
<g transform="translate(0,168)"><use href="#cb"/><rect x="4" y="3" width="33" height="34" fill="#ffffd8"/><rect x="6.500" y="5.500" width="29" height="29" stroke="#000" stroke-width="1"/><path d="M20 6v27" stroke="#888" stroke-width="1"/><g stroke="#0000c8"><rect x="16" y="10" width="8" height="4"/><rect x="13" y="18" width="13" height="6"/><rect x="16" y="28" width="7" height="4"/></g></g>
<g transform="translate(43,168)"><use href="#cb"/><rect x="4" y="3" width="33" height="34" fill="#ffffd8"/><rect x="6.500" y="5.500" width="29" height="29" stroke="#000" stroke-width="1"/><path d="M7 20h27" stroke="#888" stroke-width="1"/><g stroke="#0000c8"><rect x="9" y="17" width="4" height="6"/><rect x="17" y="13" width="7" height="14"/><rect x="28" y="17" width="5" height="6"/></g></g>
<g transform="translate(85,168)"><use href="#cb"/><rect x="4" y="3" width="33" height="34" fill="#ffffd8"/><rect x="6.500" y="5.500" width="29" height="29" stroke="#000" stroke-width="1"/><path d="M16 7v26M25 7v26" stroke="#888" stroke-width="1"/><g stroke="#0000c8"><rect x="9" y="14" width="4" height="12"/><rect x="18" y="14" width="5" height="12"/><rect x="28" y="14" width="4" height="12"/></g></g>
<g transform="translate(127,168)"><use href="#cb"/><rect x="4" y="3" width="33" height="34" fill="#ffffd8"/><rect x="6.500" y="5.500" width="29" height="29" stroke="#000" stroke-width="1"/><path d="M8 16h26M8 25h26" stroke="#888" stroke-width="1"/><g stroke="#0000c8"><rect x="15" y="9" width="11" height="4"/><rect x="15" y="19" width="11" height="4"/><rect x="15" y="28" width="11" height="4"/></g></g>
<!-- row 6 -->
<g transform="translate(0,210)"><use href="#cb"/><rect x="4" y="3" width="33" height="34" fill="#20b0a0"/><rect x="6.500" y="5.500" width="29" height="29" stroke="#000" stroke-width="1"/><path d="M10 7v26" stroke="#000" stroke-width="3"/><path d="M14 20h16" stroke="#000" stroke-width="3"/><path d="M12 20l8-6v12z" fill="#000"/></g>
<g transform="translate(43,210)"><use href="#cb"/><rect x="4" y="3" width="33" height="34" fill="#20b0a0"/><rect x="6.500" y="5.500" width="29" height="29" stroke="#000" stroke-width="1"/><path d="M31 7v26" stroke="#000" stroke-width="3"/><path d="M11 20h16" stroke="#000" stroke-width="3"/><path d="M29 20l-8-6v12z" fill="#000"/></g>
<g transform="translate(85,210)"><use href="#cb"/><rect x="4" y="3" width="33" height="34" fill="#20b0a0"/><rect x="6.500" y="5.500" width="29" height="29" stroke="#000" stroke-width="1"/><path d="M8 10h25" stroke="#000" stroke-width="3"/><path d="M20 15v16" stroke="#000" stroke-width="3"/><path d="M20 13l-5 8h10z" fill="#000"/></g>
<g transform="translate(127,210)"><use href="#cb"/><rect x="4" y="3" width="33" height="34" fill="#20b0a0"/><rect x="6.500" y="5.500" width="29" height="29" stroke="#000" stroke-width="1"/><path d="M8 31h25" stroke="#000" stroke-width="3"/><path d="M20 9v16" stroke="#000" stroke-width="3"/><path d="M20 28l-5-8h10z" fill="#000"/></g>
<!-- row 7 -->
<g transform="translate(0,252)"><use href="#cb"/><rect x="4" y="3" width="33" height="34" fill="#20b0a0"/><rect x="6.500" y="5.500" width="29" height="29" stroke="#000" stroke-width="1"/><path d="M9 7v26M32 7v26M13 20h16" stroke="#000" stroke-width="2.500"/><path d="M12 20l6-5v10zM29 20l-6-5v10z" fill="#000"/></g>
<g transform="translate(43,252)"><use href="#cb"/><rect x="4" y="3" width="33" height="34" fill="#20b0a0"/><rect x="6.500" y="5.500" width="29" height="29" stroke="#000" stroke-width="1"/><path d="M7 9h27M7 32h27M20 13v16" stroke="#000" stroke-width="2.500"/><path d="M20 12l-5 6h10zM20 29l-5-6h10z" fill="#000"/></g>
<g transform="translate(85,252)"><use href="#cb"/><rect x="4" y="3" width="33" height="34" fill="#20b0a0"/><rect x="6.500" y="5.500" width="29" height="29" stroke="#000" stroke-width="1"/><path d="M20 8v25M8 20h24" stroke="#000" stroke-width="2.500"/><path d="M19 20l-7-5v10zM22 20l7-5v10z" fill="#000"/></g>
<g transform="translate(127,252)"><use href="#cb"/><rect x="4" y="3" width="33" height="34" fill="#20b0a0"/><rect x="6.500" y="5.500" width="29" height="29" stroke="#000" stroke-width="1"/><path d="M7 20h27M20 8v24" stroke="#000" stroke-width="2.500"/><path d="M20 19l-5-7h10zM20 22l-5 7h10z" fill="#000"/></g>
<!-- row 8 -->
<g transform="translate(0,296)"><use href="#cb"/><rect x="4" y="3" width="33" height="34" fill="#ffc44f"/><rect x="6" y="5" width="29" height="29" fill="#000"/><rect x="14" y="9" width="6" height="9" stroke="#0000e0"/><path d="M18 15l7 15-4-5-3 5z" fill="#ffc44f" stroke="#ffc44f" stroke-width="1"/></g>
<g transform="translate(43,296)"><use href="#cb"/><rect x="4" y="3" width="33" height="34" fill="#ffc44f"/><rect x="6.500" y="5.500" width="29" height="29" stroke="#000" stroke-width="1"/><rect x="9" y="8" width="23" height="23" stroke="#e02000"/><rect x="14" y="9" width="6" height="9" stroke="#0000c8"/><path d="M18 15l8 15-4-5-3 4z" fill="#000" stroke="#000" stroke-width="1"/></g>
<g transform="translate(85,296)"><use href="#cb"/><rect x="4" y="3" width="33" height="34" fill="#ffc44f"/><rect x="6.500" y="5.500" width="29" height="29" stroke="#000" stroke-width="1"/><path d="M14 8h17v23H14l-6-6V14z" stroke="#e02000"/><rect x="14" y="9" width="6" height="9" stroke="#0000c8"/><path d="M18 15l8 15-4-5-3 4z" fill="#000" stroke="#000" stroke-width="1"/></g>
<g transform="translate(127,296)"><use href="#cb"/><rect x="4" y="3" width="33" height="34" fill="#ffc44f"/><rect x="6.500" y="5.500" width="29" height="29" stroke="#000" stroke-width="1"/><rect x="11" y="9" width="9" height="10" stroke="#0000c8"/><path d="M20 15c1-5 10-5 10 0 0 4-6 5-6 9M24 27v3" stroke="#e00000"/></g>
</svg>
<div class="a c sf" style="left:1747px;top:542px;width:169px;height:19px;background:#ffc44f;font-size:14px">Selected steps : 0</div>
<div class="a" style="left:1747px;top:562px;width:169px;height:58px;background:#9edada"></div>
<div class="a" style="left:1747px;top:562px;width:169px;height:2px;background:#000"></div><div class="a" style="left:1747px;top:590px;width:169px;height:2px;background:#000"></div><div class="a" style="left:1830px;top:562px;width:2px;height:28px;background:#000"></div>
<div class="a bt c sf" style="left:1749px;top:565px;width:80px;height:24px">Margins</div>
<div class="a bt c sf" style="left:1833px;top:565px;width:81px;height:24px">Table</div>
<div class="a bt c sf" style="left:1749px;top:593px;width:165px;height:24px">Panel size</div>
<div class="a" style="left:1747px;top:619px;width:169px;height:146px;background:#9edada;border-top:2px solid #000"></div>
<div class="a sf" style="left:1747px;top:628px">Keep S&amp;R  :</div>
<div class="a bt sf" style="left:1842px;top:624px;width:56px;height:27px;line-height:23px;padding-left:7px">No<i class="mi" style="left:36px;top:9px"></i></div>
<div class="a sf" style="left:1747px;top:659px">Keep Gap    :</div>
<div class="a bt sf" style="left:1843px;top:655px;width:56px;height:27px;line-height:23px;padding-left:7px">No<i class="mi" style="left:36px;top:9px"></i></div>
<div class="a sf" style="left:1747px;top:690px">Keep Margin:</div>
<div class="a bt sf" style="left:1843px;top:686px;width:56px;height:27px;line-height:23px;padding-left:7px">No<i class="mi" style="left:36px;top:9px"></i></div>
<div class="a c sf" style="left:1747px;top:714px;width:169px;height:21px;background:#b0ffff;border:solid #000;border-width:1px 0 2px;font-size:14.500px">Reduce S&amp;R nesting</div>
<div class="a bt c sf" style="left:1749px;top:738px;width:165px;height:25px">Close</div>

</body></html>
